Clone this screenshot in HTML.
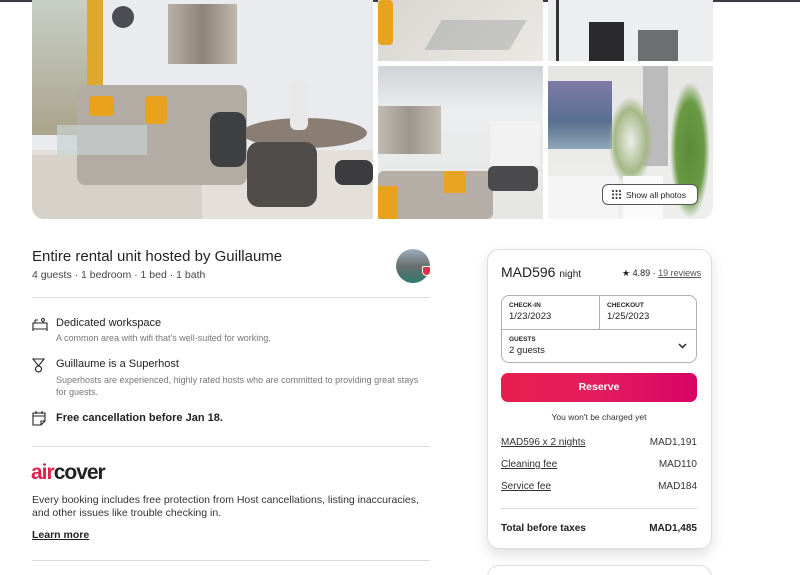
<!DOCTYPE html>
<html><head><meta charset="utf-8"><style>
*{margin:0;padding:0;box-sizing:border-box}
html,body{width:800px;height:575px;overflow:hidden}
body{background:#fff;font-family:"Liberation Sans",sans-serif;color:#222;position:relative}
.a{position:absolute}
.ph{position:absolute;overflow:hidden}
.t{position:absolute;white-space:nowrap}
.ul{text-decoration:underline}
.hr{position:absolute;height:1px;background:#ddd}
</style></head><body>
<div class="a" style="left:0;top:0;width:800px;height:2px;background:#3a3a48"></div>

<!-- main photo -->
<div class="ph" style="left:32px;top:0;width:341px;height:219px;border-radius:0 0 0 12px;background:#e9ebee">
 <div class="a" style="left:0;top:0;width:55px;height:135px;background:linear-gradient(#c8cfc8,#a9a48a)"></div>
 <div class="a" style="left:55px;top:0;width:16px;height:110px;background:#e0a82a"></div>
 <div class="a" style="left:80px;top:6px;width:22px;height:22px;border-radius:50%;background:#4a4e52"></div>
 <div class="a" style="left:136px;top:4px;width:69px;height:60px;background:linear-gradient(90deg,#b9b1a6,#8d8478,#c1b8ac)"></div>
 <div class="a" style="left:0;top:150px;width:341px;height:69px;background:#e4e0d9"></div>
 <div class="a" style="left:0;top:155px;width:170px;height:64px;background:#d7d2c9"></div>
 <div class="a" style="left:45px;top:85px;width:170px;height:100px;background:#b3aca4;border-radius:8px"></div>
 <div class="a" style="left:57px;top:96px;width:25px;height:20px;background:#e8a21e;border-radius:4px"></div>
 <div class="a" style="left:113px;top:96px;width:22px;height:28px;background:#e8a21e;border-radius:4px"></div>
 <div class="a" style="left:25px;top:125px;width:90px;height:30px;background:rgba(200,210,210,.7)"></div>
 <div class="a" style="left:210px;top:118px;width:125px;height:30px;border-radius:50%;background:#8a7e74"></div>
 <div class="a" style="left:178px;top:112px;width:36px;height:55px;background:#3f4044;border-radius:10px"></div>
 <div class="a" style="left:215px;top:142px;width:70px;height:65px;background:#4f4c4a;border-radius:12px"></div>
 <div class="a" style="left:303px;top:160px;width:38px;height:25px;background:#3c3c3e;border-radius:8px"></div>
 <div class="a" style="left:258px;top:80px;width:18px;height:50px;background:#e8e8e8;border-radius:6px"></div>
</div>
<!-- top grid row -->
<div class="ph" style="left:378px;top:0;width:165px;height:61px;background:linear-gradient(135deg,#d8d6d2,#ece9e4)">
 <div class="a" style="left:0;top:0;width:15px;height:45px;background:#e8a21e;border-radius:4px"></div>
 <div class="a" style="left:55px;top:20px;width:85px;height:30px;background:rgba(120,130,130,.3);transform:skewX(-30deg)"></div>
</div>
<div class="ph" style="left:548px;top:0;width:165px;height:61px;background:#eceeef">
 <div class="a" style="left:41px;top:22px;width:35px;height:39px;background:#2a2a2c"></div>
 <div class="a" style="left:90px;top:30px;width:40px;height:31px;background:#6d6e70"></div>
 <div class="a" style="left:8px;top:0;width:3px;height:61px;background:#333"></div>
</div>
<!-- bottom grid row -->
<div class="ph" style="left:378px;top:66px;width:165px;height:153px;background:linear-gradient(#d0d3d6,#eceeef 30%,#e5e5e3)">
 <div class="a" style="left:0;top:40px;width:63px;height:48px;background:linear-gradient(90deg,#c2bbb0,#9d968c,#c5bdb2)"></div>
 <div class="a" style="left:112px;top:55px;width:50px;height:45px;background:#f2f2f2"></div>
 <div class="a" style="left:0;top:105px;width:115px;height:48px;background:#b5aea6;border-radius:6px"></div>
 <div class="a" style="left:0;top:120px;width:20px;height:33px;background:#e8a21e"></div>
 <div class="a" style="left:66px;top:105px;width:22px;height:22px;background:#eaa424"></div>
 <div class="a" style="left:110px;top:100px;width:50px;height:25px;background:#4a4a4c;border-radius:6px"></div>
</div>
<div class="ph" style="left:548px;top:66px;width:165px;height:153px;border-radius:0 0 12px 0;background:linear-gradient(#e5e5e3,#efefed)">
 <div class="a" style="left:0;top:15px;width:64px;height:68px;background:linear-gradient(#7d7aa6,#5a7090 60%,#8ea6b8)"></div>
 <div class="a" style="left:95px;top:0;width:25px;height:100px;background:#bbb"></div>
 <div class="a" style="left:122px;top:15px;width:40px;height:138px;background:radial-gradient(#5c8a3a,#6a9a45 50%,rgba(240,240,240,0) 70%)"></div>
 <div class="a" style="left:60px;top:30px;width:45px;height:90px;background:radial-gradient(#eeeeea,#a5b888 50%,rgba(240,240,240,0) 70%)"></div>
 <div class="a" style="left:75px;top:110px;width:40px;height:43px;background:#fafafa"></div>
 <div class="a" style="left:0;top:110px;width:70px;height:45px;background:#f5f5f5"></div>
</div>
<div class="a" style="left:602px;top:184px;width:96px;height:21px;background:#fff;border:1px solid #555;border-radius:6px;font-size:8.5px;color:#222;padding:5px 0 0 23px;white-space:nowrap">Show all photos</div>
<svg class="a" style="left:612px;top:190px" width="9" height="9"><g fill="#222"><circle cx="1" cy="1" r="1"/><circle cx="4.5" cy="1" r="1"/><circle cx="8" cy="1" r="1"/><circle cx="1" cy="4.5" r="1"/><circle cx="4.5" cy="4.5" r="1"/><circle cx="8" cy="4.5" r="1"/><circle cx="1" cy="8" r="1"/><circle cx="4.5" cy="8" r="1"/><circle cx="8" cy="8" r="1"/></g></svg>

<!-- left info -->
<div class="t" style="left:32px;top:248px;font-size:15px">Entire rental unit hosted by Guillaume</div>
<div class="t" style="left:32px;top:269px;font-size:10.5px;color:#444">4 guests · 1 bedroom · 1 bed · 1 bath</div>
<div class="a" style="left:396px;top:249px;width:34px;height:34px;border-radius:50%;background:linear-gradient(#9ab0c0,#6a6e6c 50%,#2f7a70)"></div>
<div class="a" style="left:422px;top:266px;width:9px;height:10px;background:#e0304a;border:1px solid #fff;border-radius:2px 2px 5px 5px"></div>
<div class="hr" style="left:32px;top:297px;width:398px"></div>

<svg class="a" style="left:32px;top:317px" width="16" height="14" fill="none" stroke="#222" stroke-width="1.1"><path d="M1 6h14v6H1z M3 6V3 M3 3h3 M11 1.5a1.5 1.5 0 1 0 .01 0 M11 4.5V6 M1 12v2 M15 12v2"/></svg>
<div class="t" style="left:56px;top:317px;font-size:11px">Dedicated workspace</div>
<div class="t" style="left:56px;top:333px;font-size:9px;color:#777">A common area with wifi that's well-suited for working.</div>
<svg class="a" style="left:32px;top:358px" width="14" height="16" fill="none" stroke="#222" stroke-width="1.1"><path d="M1 1h11L6.5 8z M6.5 8a3 3 0 1 0 .01 0"/></svg>
<div class="t" style="left:56px;top:358px;font-size:11px">Guillaume is a Superhost</div>
<div class="a" style="left:56px;top:374px;width:375px;font-size:9px;line-height:12px;color:#777">Superhosts are experienced, highly rated hosts who are committed to providing great stays for guests.</div>
<svg class="a" style="left:32px;top:411px" width="14" height="15" fill="none" stroke="#222" stroke-width="1.1"><path d="M1 2h12v8l-4 4H1z M1 5h12 M4 0v3 M10 0v3 M9 14v-4h4"/></svg>
<div class="t" style="left:56px;top:412px;font-size:11px;font-weight:bold">Free cancellation before Jan 18.</div>
<div class="hr" style="left:32px;top:446px;width:398px"></div>

<div class="t" style="left:31px;top:461px;font-size:21px;font-weight:bold;letter-spacing:-1px"><span style="color:#e61e4d">air</span><span style="color:#222">cover</span></div>
<div class="a" style="left:32px;top:494px;width:400px;font-size:10.5px;line-height:13px;color:#333">Every booking includes free protection from Host cancellations, listing inaccuracies, and other issues like trouble checking in.</div>
<div class="t ul" style="left:32px;top:529px;font-size:10.5px;font-weight:bold">Learn more</div>
<div class="hr" style="left:32px;top:560px;width:398px"></div>

<!-- booking card -->
<div class="a" style="left:487px;top:249px;width:225px;height:300px;border:1px solid #ddd;border-radius:12px;box-shadow:0 6px 14px rgba(0,0,0,.12);background:#fff"></div>
<div class="t" style="left:501px;top:264px;font-size:14px">MAD596 <span style="font-size:10px">night</span></div>
<div class="t" style="left:622px;top:268px;font-size:9px">★ 4.89 · <span class="ul" style="color:#555">19 reviews</span></div>
<div class="a" style="left:501px;top:295px;width:196px;height:68px;border:1px solid #b0b0b0;border-radius:8px"></div>
<div class="a" style="left:599px;top:295px;width:1px;height:34px;background:#b0b0b0"></div>
<div class="a" style="left:501px;top:329px;width:196px;height:1px;background:#b0b0b0"></div>
<div class="t" style="left:509px;top:302px;font-size:6.5px;font-weight:bold">CHECK-IN</div>
<div class="t" style="left:509px;top:311px;font-size:9.5px">1/23/2023</div>
<div class="t" style="left:607px;top:302px;font-size:6.5px;font-weight:bold">CHECKOUT</div>
<div class="t" style="left:607px;top:311px;font-size:9.5px">1/25/2023</div>
<div class="t" style="left:509px;top:336px;font-size:6.5px;font-weight:bold">GUESTS</div>
<div class="t" style="left:509px;top:345px;font-size:9.5px">2 guests</div>
<svg class="a" style="left:678px;top:343px" width="9" height="6" fill="none" stroke="#222" stroke-width="1.4"><path d="M1 1l3.5 3.5L8 1"/></svg>
<div class="a" style="left:501px;top:373px;width:196px;height:29px;border-radius:7px;background:linear-gradient(90deg,#e61e4d,#e31c5f 50%,#d70466);color:#fff;font-size:10.5px;font-weight:bold;text-align:center;line-height:29px">Reserve</div>
<div class="t" style="left:501px;width:196px;text-align:center;top:412px;font-size:8.5px;color:#333">You won't be charged yet</div>
<div class="t ul" style="left:501px;top:437px;font-size:10px;color:#333">MAD596 x 2 nights</div>
<div class="t" style="right:103px;top:437px;font-size:10px;color:#333">MAD1,191</div>
<div class="t ul" style="left:501px;top:459px;font-size:10px;color:#333">Cleaning fee</div>
<div class="t" style="right:103px;top:459px;font-size:10px;color:#333">MAD110</div>
<div class="t ul" style="left:501px;top:481px;font-size:10px;color:#333">Service fee</div>
<div class="t" style="right:103px;top:481px;font-size:10px;color:#333">MAD184</div>
<div class="hr" style="left:501px;top:508px;width:196px"></div>
<div class="t" style="left:501px;top:523px;font-size:10px;font-weight:bold">Total before taxes</div>
<div class="t" style="right:103px;top:523px;font-size:10px;font-weight:bold">MAD1,485</div>
<div class="a" style="left:487px;top:565px;width:225px;height:30px;border:1px solid #ddd;border-radius:12px"></div>
</body></html>
